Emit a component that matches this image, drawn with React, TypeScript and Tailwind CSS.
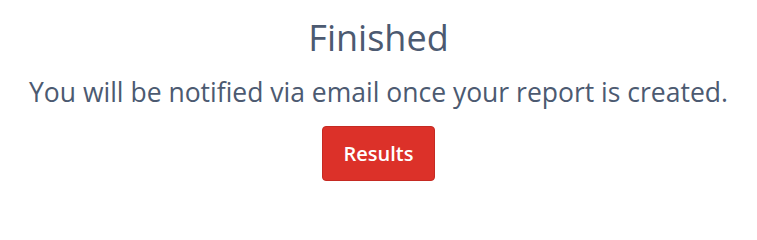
export default function App() {
  return (
    <div
      className="flex flex-col items-center bg-white pt-[18px] text-[#4c5a71]"
      style={{ fontFamily: '"Open Sans", "Liberation Sans", sans-serif' }}
    >
      <h1 className="text-[36px] leading-[40px]">Finished</h1>
      <p className="mt-[16px] text-[26.5px] leading-[36px]">
        You will be notified via email once your report is created.
      </p>
      <button
        type="button"
        className="mt-[16px] h-[55px] w-[113px] rounded-[4px] border border-[#c52a22] bg-[#dc3129] text-[20px] font-semibold text-white"
      >
        Results
      </button>
    </div>
  );
}
